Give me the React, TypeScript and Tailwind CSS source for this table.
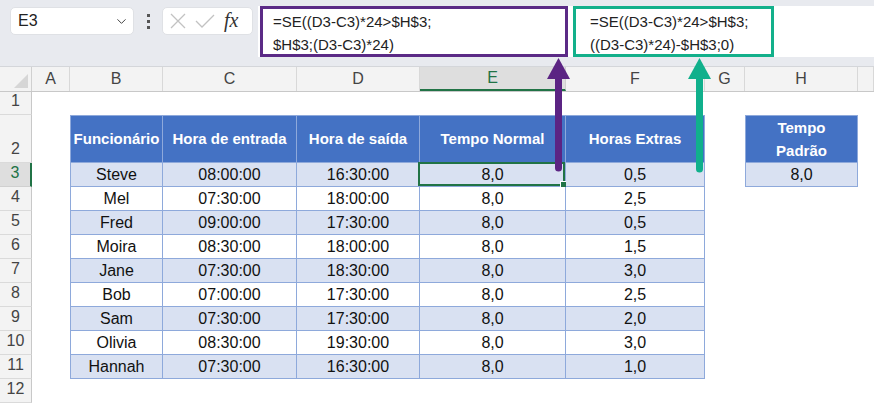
import React from 'react';
import { ChevronDown } from 'lucide-react';

const cols = [
  { key: 'A', w: 'w-[38px]' },
  { key: 'B', w: 'w-[93px]' },
  { key: 'C', w: 'w-[134px]' },
  { key: 'D', w: 'w-[123px]' },
  { key: 'E', w: 'w-[146px]' },
  { key: 'F', w: 'w-[139px]' },
  { key: 'G', w: 'w-[40px]' },
  { key: 'H', w: 'w-[113px]' },
  { key: '', w: 'flex-1' },
];

const headers = ['Funcionário', 'Hora de entrada', 'Hora de saída', 'Tempo Normal', 'Horas Extras'];

const data = [
  ['Steve', '08:00:00', '16:30:00', '8,0', '0,5'],
  ['Mel', '07:30:00', '18:00:00', '8,0', '2,5'],
  ['Fred', '09:00:00', '17:30:00', '8,0', '0,5'],
  ['Moira', '08:30:00', '18:00:00', '8,0', '1,5'],
  ['Jane', '07:30:00', '18:30:00', '8,0', '3,0'],
  ['Bob', '07:00:00', '17:30:00', '8,0', '2,5'],
  ['Sam', '07:30:00', '17:30:00', '8,0', '2,0'],
  ['Olivia', '08:30:00', '19:30:00', '8,0', '3,0'],
  ['Hannah', '07:30:00', '16:30:00', '8,0', '1,0'],
];

const FormulaBar: React.FC = () => (
  <div className="h-[67px] bg-[#e8eaef] border-b border-[#d4d6da] flex items-start pl-[10px] pt-[6px]">
    {/* name box */}
    <div className="mt-[1px] w-[124px] h-[28px] bg-white rounded-[5px] border border-[#dfe1e5] flex items-center justify-between pl-[7px] pr-[4px] text-[16px] text-[#222]">
      <span>E3</span>
      <ChevronDown size={15} strokeWidth={1.6} className="text-[#444]" />
    </div>
    <div className="w-[28px] h-[30px] flex flex-col items-center justify-center gap-[3px]">
      <span className="w-[3px] h-[3px] bg-[#555]" />
      <span className="w-[3px] h-[3px] bg-[#555]" />
      <span className="w-[3px] h-[3px] bg-[#555]" />
    </div>
    {/* cancel / enter / fx */}
    <div className="mt-[1px] w-[91px] h-[28px] bg-white rounded-[5px] border border-[#dfe1e5] flex items-center pl-[7px] gap-[9px]">
      <svg width="16" height="16" viewBox="0 0 16 16" className="text-[#c2c2c2]">
        <path d="M1 1 L15 15 M15 1 L1 15" stroke="currentColor" strokeWidth="1.3" fill="none" />
      </svg>
      <svg width="20" height="16" viewBox="0 0 20 16" className="text-[#c2c2c2]">
        <path d="M1 8 L7 14 L19 2" stroke="currentColor" strokeWidth="1.3" fill="none" />
      </svg>
      <span className="font-['Liberation_Serif',serif] italic text-[20px] leading-none text-[#333] -mt-[2px]">fx</span>
    </div>
    {/* formula content */}
    <div className="ml-[5px] flex-1 h-[51px] bg-white flex items-stretch pl-[2px]">
      <div className="w-[308px] border-[3px] border-[#5b2a86] pl-[10px] pt-[1px] text-[15px] leading-[23px] text-[#222]">
        <div>=SE((D3-C3)*24&gt;$H$3;</div>
        <div>$H$3;(D3-C3)*24)</div>
      </div>
      <div className="ml-[5px] w-[201px] border-[3px] border-[#13b08b] pl-[14px] pt-[1px] text-[15px] leading-[23px] text-[#222]">
        <div>=SE((D3-C3)*24&gt;$H$3;</div>
        <div>((D3-C3)*24)-$H$3;0)</div>
      </div>
    </div>
  </div>
);

const ColumnHeaders: React.FC = () => (
  <div className="h-[25px] flex bg-[#f3f3f3] border-b border-[#c8c8c8] text-[16px] text-[#444]">
    <div className="w-[32px] border-r border-[#d0d0d0] relative">
      <div className="absolute right-[3px] bottom-[3px] w-0 h-0 border-l-[14px] border-l-transparent border-b-[14px] border-b-[#d6d6d6]" />
    </div>
    {cols.map((c, i) =>
      c.key === 'E' ? (
        <div
          key={i}
          className={`${c.w} bg-[#dedede] border-r border-[#d0d0d0] border-b-2 border-b-[#217346] text-[#217346] flex items-center justify-center`}
        >
          {c.key}
        </div>
      ) : (
        <div key={i} className={`${c.w} border-r border-[#d8d8d8] flex items-center justify-center`}>
          {c.key}
        </div>
      )
    )}
  </div>
);

const RowHeader: React.FC<{ n: number; h: string }> = ({ n, h }) =>
  n === 3 ? (
    <div className={`w-[32px] ${h} shrink-0 bg-[#dedede] border-b border-[#d0d0d0] border-r-2 border-r-[#217346] text-[#217346] flex items-end justify-center pb-[1px] text-[16px]`}>
      {n}
    </div>
  ) : (
    <div className={`w-[32px] ${h} shrink-0 bg-[#f3f3f3] border-b border-[#dadada] border-r border-r-[#c8c8c8] text-[#444] flex items-end justify-center pb-[1px] text-[16px]`}>
      {n}
    </div>
  );

const Sheet: React.FC = () => {
  const rows: React.ReactNode[] = [];

  // row 1
  rows.push(
    <div key={1} className="flex h-[23px]">
      <RowHeader n={1} h="h-[23px]" />
      <div className="flex-1" />
    </div>
  );

  // row 2 - table headers
  rows.push(
    <div key={2} className="flex h-[48px]">
      <RowHeader n={2} h="h-[48px]" />
      <div className="w-[38px]" />
      {headers.map((t, i) => (
        <div
          key={t}
          className={`${cols[i + 1].w} ${i === 0 ? 'border-l' : ''} border-t border-r border-b border-[#8ea9db] bg-[#4472c4] text-white font-bold text-[15px] flex items-center justify-center whitespace-nowrap`}
        >
          {t}
        </div>
      ))}
      <div className="w-[40px]" />
      <div className="w-[113px] border border-[#8ea9db] bg-[#4472c4] text-white font-bold text-[15px] leading-[23px] flex flex-col items-center justify-center">
        <span>Tempo</span>
        <span>Padrão</span>
      </div>
      <div className="flex-1" />
    </div>
  );

  // rows 3-11 data
  data.forEach((r, idx) => {
    const n = idx + 3;
    const shade = idx % 2 === 0 ? 'bg-[#d9e1f2]' : 'bg-white';
    rows.push(
      <div key={n} className="flex h-[24px]">
        <RowHeader n={n} h="h-[24px]" />
        <div className="w-[38px]" />
        {r.map((v, i) => (
          <div
            key={i}
            className={`${cols[i + 1].w} ${i === 0 ? 'border-l' : ''} border-r border-b border-[#8ea9db] ${shade} text-[16px] text-[#111] flex items-center justify-center relative`}
          >
            {v}
            {n === 3 && i === 3 && (
              <div className="absolute -left-[2px] -top-[1px] right-0 bottom-0 border-2 border-[#217346]">
                <div className="absolute -right-[4px] -bottom-[4px] w-[7px] h-[7px] bg-[#217346] border border-white" />
              </div>
            )}
          </div>
        ))}
        <div className="w-[40px]" />
        {n === 3 ? (
          <div className="w-[113px] border-l border-r border-b border-[#8ea9db] bg-[#d9e1f2] text-[16px] text-[#111] flex items-center justify-center">
            8,0
          </div>
        ) : (
          <div className="w-[113px]" />
        )}
        <div className="flex-1" />
      </div>
    );
  });

  // row 12
  rows.push(
    <div key={12} className="flex h-[24px]">
      <RowHeader n={12} h="h-[24px]" />
      <div className="flex-1" />
    </div>
  );

  return <div className="flex flex-col">{rows}</div>;
};

const Arrows: React.FC = () => (
  <svg className="absolute inset-0 pointer-events-none" width="874" height="406" viewBox="0 0 874 406">
    <line x1="558.5" y1="168" x2="558.5" y2="74" stroke="#5b2483" strokeWidth="7" strokeLinecap="round" />
    <polygon points="558.5,58 547,79 570,79" fill="#5b2483" />
    <line x1="699.5" y1="169" x2="699.5" y2="74" stroke="#10b08c" strokeWidth="7" strokeLinecap="round" />
    <polygon points="699.5,58 688,79 711,79" fill="#10b08c" />
  </svg>
);

export default function App() {
  return (
    <div className="w-[874px] h-[406px] overflow-hidden relative bg-white font-['Liberation_Sans',Arial,sans-serif]">
      <FormulaBar />
      <ColumnHeaders />
      <Sheet />
      <Arrows />
    </div>
  );
}
